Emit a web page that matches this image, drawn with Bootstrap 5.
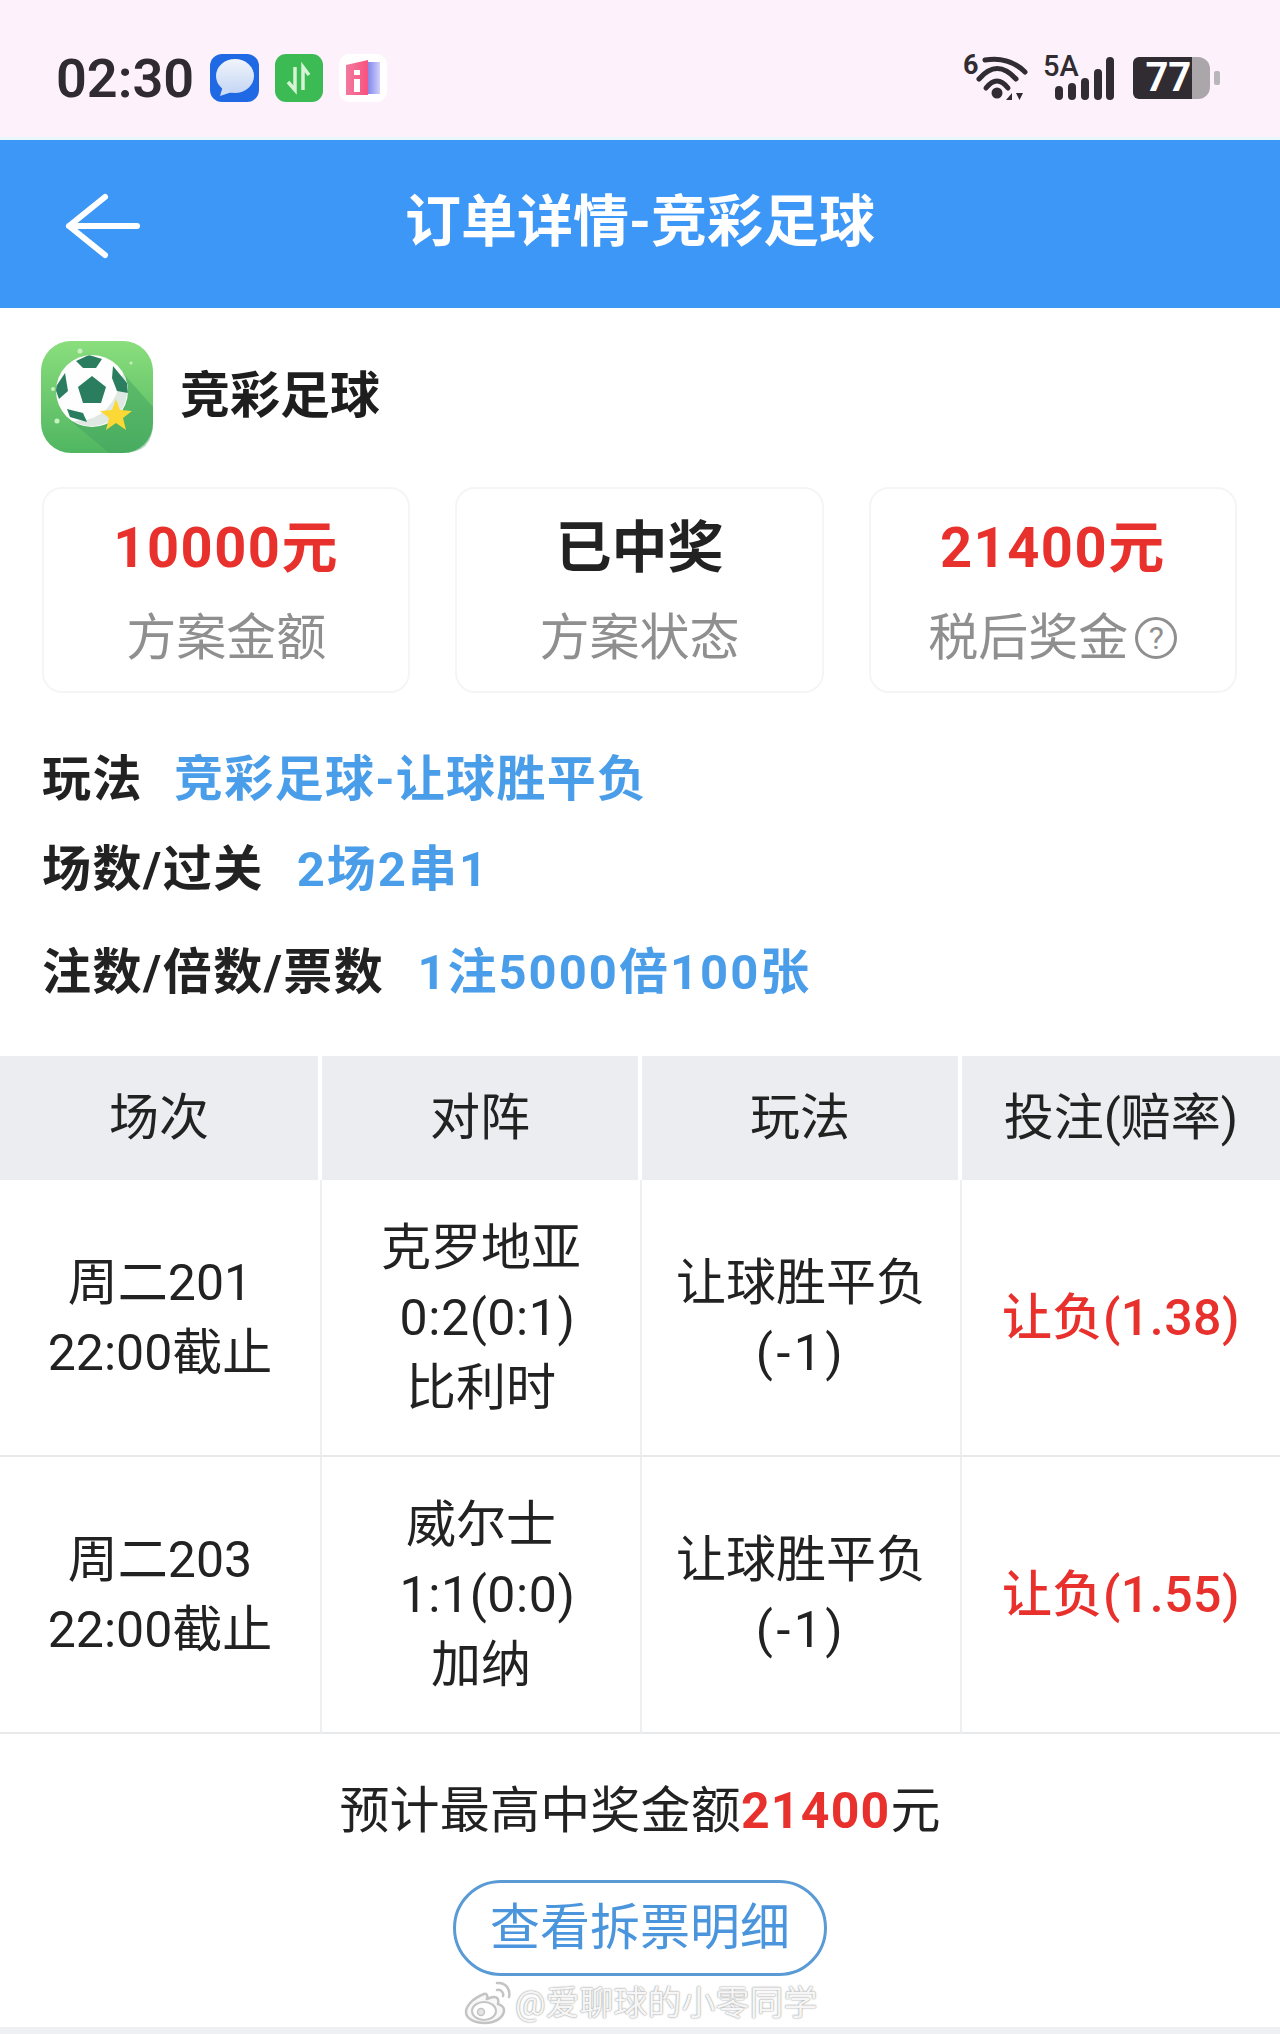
<!DOCTYPE html>
<html lang="zh-CN">
<head>
  <meta charset="UTF-8" />
  <meta name="viewport" content="width=device-width, initial-scale=1.0"/>
  <title>订单详情-竞彩足球</title>
  <link href="https://cdn.jsdelivr.net/npm/bootstrap@5.3.0/dist/css/bootstrap.min.css" rel="stylesheet"/>
  <style>
    body { font-family: Roboto, "Noto Sans CJK SC", sans-serif; color: #222; background: #fff; width: 1280px; height: 2034px; overflow: hidden; }
    .status-bar { height: 137px; background: #fdf2fc; padding: 19px 60px 0 56px; }
    .status-time { font-size: 54px; font-weight: 600; color: #2f2b30; line-height: 1; padding-top: 1px; }
    .status-strip { height: 3px; background: #e9f8fd; }
    .status-glyph { margin-top: -10px; }
    .batt-body { width: 77px; height: 42px; margin-left: 18px; border-radius: 12px; background: #aaa6aa; }
    .batt-fill { height: 100%; background: #302c31; color: #fff; font-size: 40px; font-weight: 700; line-height: 1; padding-right: 1px; }
    .batt-tip { width: 6px; height: 14px; margin-left: 4px; border-radius: 2px; background: #b9b6b9; }
    .top-bar { height: 168px; background: #3d97f7; color: #fff; }
    .top-bar-back { left: 62px; top: 52px; }
    .top-bar-title { font-size: 56px; font-weight: 700; line-height: 1; margin-top: -5px; }
    .page-body { padding: 33px 43px 0 41px; }
    .app-name { font-size: 50px; font-weight: 700; margin-left: 27px; margin-top: -1px; color: #1e1e1e; }
    .stat-row { margin: 34px 0 0 1px; gap: 45px; }
    .stat-box { flex: 1 1 0; height: 206px; padding-top: 24px; border: 2px solid #f5f5f6; border-radius: 20px; }
    .stat-value { font-size: 56px; font-weight: 700; line-height: 70px; }
    .stat-label { font-size: 50px; line-height: 70px; margin-top: 20px; color: #8f8f8f; }
    .text-win { color: #e8302c; letter-spacing: 1.5px; }
    .help-mark { width: 42px; height: 42px; border: 3px solid #8f8f8f; font-size: 32px; line-height: 1; margin-left: 7px; }
    .info-list { margin: 52px 0 0 1px; }
    .info-line { font-size: 49px; font-weight: 700; line-height: 70px; gap: 31px; }
    .info-line + .info-line { margin-top: 20px; }
    .info-line + .info-line + .info-line { margin-top: 33px; }
    .info-key { letter-spacing: 1.5px; }
    .info-val { color: #4a9de8; letter-spacing: 1.3px; }
    .info-val.num-val { letter-spacing: 2px; margin-left: 2px; }
    .bet-table { table-layout: fixed; width: 1280px; margin: 48px 0 0; font-size: 50px; line-height: 70px; text-align: center; border-collapse: separate; border-spacing: 0; }
    .bet-table th { height: 124px; padding: 0; font-weight: 400; background: #ebedf0; color: #222; vertical-align: middle; border: 0; border-right: 4px solid #fff; }
    .bet-table th:last-child { border-right: 0; }
    .bet-table td { height: 277px; padding: 0; vertical-align: middle; color: #222; background: #fff; border: 0; border-right: 2px solid #eeeff1; border-bottom: 2px solid #e8e9eb; }
    .bet-table td:last-child { border-right: 0; }
    .bet-table .col-a { width: 322px; }
    .bet-table .col-b { width: 320px; }
    .bet-table .col-c { width: 320px; }
    .bet-table .col-d { width: 318px; }
    .bet-table td.pick { color: #e8302c; font-weight: 500; letter-spacing: .5px; }
    .score-line { padding-left: 13px; letter-spacing: .6px; }
    .handicap-line { letter-spacing: 3.5px; }
    .sum-line { font-size: 50px; line-height: 70px; margin-top: 42px; letter-spacing: .2px; }
    .sum-line b { color: #e8302c; font-weight: 700; letter-spacing: 1.2px; }
    .detail-btn { width: 374px; height: 96px; margin-top: 34px; padding: 0; font-size: 50px; line-height: 1; color: #4a95dc; background: #fff; border: 3px solid #5a9bd5; }
    .detail-btn:hover { color: #4a95dc; background: #fff; border-color: #5a9bd5; }
    .foot-strip { position: absolute; left: 0; right: 0; bottom: 0; height: 7px; background: #eef0f4; }
    .mark-weibo { left: 464px; top: 1980px; gap: 3px; }
    .mark-text { font-size: 34px; line-height: 46px; color: #f6f6f6; text-shadow: 0 0 2px #9a9a9a, 0 0 1px #b4b4b4; }
  </style>
</head>
<body class="position-relative">
  <div class="status-bar d-flex align-items-center justify-content-between">
    <div class="d-flex align-items-center">
      <span class="status-time">02:30</span>
      <svg class="ms-3" width="49" height="48" viewBox="0 0 49 48">
        <defs><linearGradient id="bub" x1="0" y1="0" x2="0" y2="1"><stop offset="0" stop-color="#f1f4fb"/><stop offset="1" stop-color="#c5d6f4"/></linearGradient></defs>
        <rect width="49" height="48" rx="12" fill="#1f6ae4"/>
        <ellipse cx="25" cy="22" rx="19" ry="17" fill="url(#bub)"/>
        <path d="M13 32 L10 42 L22 38 Z" fill="#cfdcf6"/>
      </svg>
      <svg class="ms-3" width="48" height="48" viewBox="0 0 48 48">
        <rect width="48" height="48" rx="11" fill="#3cba54"/>
        <path d="M20 13V36L13 28M28 36V13L34 21" fill="none" stroke="#d5f3d5" stroke-width="3.500"/>
      </svg>
      <svg class="ms-3" width="48" height="48" viewBox="0 0 48 48">
        <defs><linearGradient id="bk" x1="0" y1="0" x2="1" y2="0"><stop offset="0" stop-color="#f2799f"/><stop offset="1" stop-color="#f9527f"/></linearGradient>
        <linearGradient id="bk2" x1="0" y1="0" x2="1" y2="0"><stop offset="0" stop-color="#7f7fe8"/><stop offset="1" stop-color="#cfd2fb"/></linearGradient></defs>
        <rect width="48" height="48" rx="11" fill="#fff"/>
        <rect x="28" y="8" width="13" height="32" fill="url(#bk2)"/>
        <path d="M7 11L29 6V41H7Z" fill="url(#bk)"/>
        <path d="M15 25h6v13h-6zM15 16h6v5h-6z" fill="#fff"/>
      </svg>
    </div>
    <div class="d-flex align-items-center">
      <svg class="status-glyph" width="64" height="57" viewBox="0 -10 64 57">
        <text x="-1" y="19" font-family="Roboto" font-size="27" font-weight="700" fill="#302c31">6</text>
        <g fill="none" stroke="#302c31" stroke-linecap="round">
          <path d="M21 5Q45 1 61 17" stroke-width="5"/>
          <path d="M15 24Q33 3 52 24" stroke-width="5"/>
          <path d="M22 33Q33 19 44 33" stroke-width="5"/>
        </g>
        <circle cx="33" cy="38" r="5.500" fill="#302c31"/>
        <path d="M42 45L48 38V45ZM52 38h7l-3.500 7Z" fill="#302c31"/>
      </svg>
      <svg class="status-glyph ms-3" width="71" height="55" viewBox="0 -10 71 55">
        <text x="-1" y="20" font-family="Roboto" font-size="29" font-weight="500" fill="#302c31">5A</text>
        <g stroke="#302c31" stroke-width="8" stroke-linecap="round">
          <path d="M15 34V40M28 31V40M41 26V40M54 17V40M66 5V40"/>
        </g>
      </svg>
      <div class="d-flex align-items-center">
        <div class="batt-body">
          <div class="batt-fill d-flex align-items-center justify-content-end rounded-start" style="width: 77%"><span>77</span></div>
        </div>
        <div class="batt-tip"></div>
      </div>
    </div>
  </div>
  <div class="status-strip"></div>

  <div class="top-bar position-relative d-flex align-items-center justify-content-center">
    <svg class="top-bar-back position-absolute" width="80" height="68" viewBox="0 0 80 68">
      <path d="M75 34H7M43 5L7 34L43 63" fill="none" stroke="#fff" stroke-width="6" stroke-linecap="round" stroke-linejoin="round"/>
    </svg>
    <div class="top-bar-title">订单详情-竞彩足球</div>
  </div>

  <div class="page-body">
    <div class="d-flex align-items-center">
      <svg width="112" height="112" viewBox="0 0 112 112">
        <defs>
          <linearGradient id="appbg" x1="0" y1="0" x2="0" y2="1"><stop offset="0" stop-color="#8ade7c"/><stop offset="1" stop-color="#50b661"/></linearGradient>
          <clipPath id="ballclip"><circle cx="51" cy="50" r="36"/></clipPath>
        </defs>
        <rect width="112" height="112" rx="30" fill="url(#appbg)"/>
        <path d="M80 30L112 66V82Q112 112 82 112H68L30 80Z" fill="#3fa05f" opacity=".45"/>
        <circle cx="51" cy="50" r="36" fill="#fdfefd"/>
        <path d="M82 32A36 36 0 0 1 32 80Q72 82 82 32Z" fill="#dfe8e2"/>
        <g clip-path="url(#ballclip)" fill="#2b7d60">
          <path d="M51 35L65 46L60 62H42L37 46Z"/>
          <path d="M35 20L48 14L61 18L55 27H42Z"/>
          <path d="M24 32L27 50L18 58L14 47Z"/>
          <path d="M72 25L86 42L87 52L76 50L71 37Z"/>
          <path d="M26 68L42 72L46 81L29 76Z"/>
        </g>
        <path d="M75 58L79 69L91 70L82 77L85 89L75 82L65 89L68 77L59 70L71 69Z" fill="#fbd835"/>
        <g fill="#c9f1c0">
          <circle cx="39" cy="10" r="2.500"/><circle cx="12" cy="48" r="2"/><circle cx="16" cy="80" r="2.500"/><circle cx="90" cy="22" r="1.500"/>
        </g>
      </svg>
      <div class="app-name">竞彩足球</div>
    </div>

    <div class="stat-row d-flex text-center">
      <div class="stat-box">
        <div class="stat-value text-win">10000元</div>
        <div class="stat-label">方案金额</div>
      </div>
      <div class="stat-box">
        <div class="stat-value">已中奖</div>
        <div class="stat-label">方案状态</div>
      </div>
      <div class="stat-box">
        <div class="stat-value text-win">21400元</div>
        <div class="stat-label d-flex align-items-center justify-content-center">税后奖金<span class="help-mark rounded-circle d-inline-flex align-items-center justify-content-center">?</span></div>
      </div>
    </div>

    <div class="info-list">
      <div class="info-line d-flex"><span class="info-key">玩法</span><span class="info-val">竞彩足球-让球胜平负</span></div>
      <div class="info-line d-flex"><span class="info-key">场数/过关</span><span class="info-val num-val">2场2串1</span></div>
      <div class="info-line d-flex"><span class="info-key">注数/倍数/票数</span><span class="info-val num-val">1注5000倍100张</span></div>
    </div>
  </div>

  <table class="table bet-table">
    <thead>
      <tr>
        <th class="col-a">场次</th>
        <th class="col-b">对阵</th>
        <th class="col-c">玩法</th>
        <th class="col-d">投注(赔率)</th>
      </tr>
    </thead>
    <tbody>
      <tr>
        <td>周二201<br>22:00截止</td>
        <td>克罗地亚<br><span class="score-line">0:2(0:1)</span><br>比利时</td>
        <td>让球胜平负<br><span class="handicap-line">(-1)</span></td>
        <td class="pick">让负(1.38)</td>
      </tr>
      <tr>
        <td>周二203<br>22:00截止</td>
        <td>威尔士<br><span class="score-line">1:1(0:0)</span><br>加纳</td>
        <td>让球胜平负<br><span class="handicap-line">(-1)</span></td>
        <td class="pick">让负(1.55)</td>
      </tr>
    </tbody>
  </table>

  <div class="text-center">
    <div class="sum-line">预计最高中奖金额<b>21400</b>元</div>
    <button type="button" class="btn detail-btn rounded-pill">查看拆票明细</button>
  </div>

  <div class="foot-strip"></div>

  <!-- watermark sits over the button edge -->
  <div class="mark-weibo position-absolute d-flex align-items-center">
    <svg width="48" height="44" viewBox="0 0 48 44">
      <g fill="none" stroke="#c4c4c4" stroke-width="2.500" stroke-linecap="round">
        <path d="M20 13C9 17 2 25 2 31C2 38 11 42 21 42C32 42 40 36 40 29C40 25 36 24 34 23C35 19 34 16 30 16C27 16 24 18 23 18C24 15 23 12 20 13Z" fill="#f8f8f8"/>
        <path d="M33 2C41 1 47 8 45 16M33 9C37 8 40 12 39 15"/>
        <ellipse cx="20" cy="30" rx="12" ry="9" fill="#fff" stroke-width="2"/>
        <circle cx="17" cy="31" r="3.500" fill="#e4e4e4" stroke-width="1.500"/>
      </g>
    </svg>
    <span class="mark-text">@爱聊球的小零同学</span>
  </div>
</body>
</html>
